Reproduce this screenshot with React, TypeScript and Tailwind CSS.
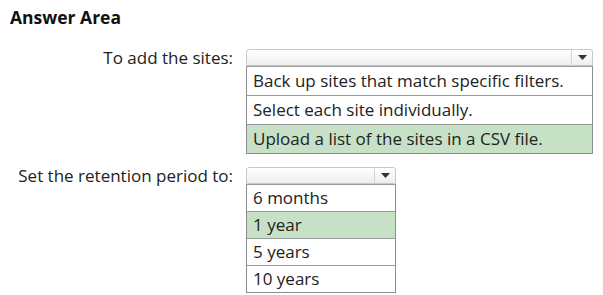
const font = { fontFamily: '"Open Sans", "Liberation Sans", sans-serif' };

function Select({ width }: { width: string }) {
  return (
    <div className={`${width} h-[17px] flex rounded-t-[3px] border border-[#c8c8c8] bg-gradient-to-b from-white to-[#eeeeee]`}>
      <div className="flex-1" />
      <div className="w-[21px] border-l border-[#d4d4d4] flex items-center justify-center">
        <svg width="9" height="5" viewBox="0 0 9 5">
          <path d="M0 0 L9 0 L4.5 5 Z" fill="#333" />
        </svg>
      </div>
    </div>
  );
}

function Options({
  width,
  items,
  selected,
  rowH,
}: {
  width: string;
  items: string[];
  selected: number;
  rowH: string;
}) {
  return (
    <div className={`${width} border border-[#8c8c8c] border-t-0`}>
      {items.map((item, i) => (
        <div
          key={item}
          className={`${rowH} flex items-center pl-[6px] pb-[2px] text-[17px] leading-none border-t border-[#9a9a9a] ${
            i === selected ? "bg-[#c6e1c6]" : "bg-white"
          }`}
        >
          {item}
        </div>
      ))}
    </div>
  );
}

export default function App() {
  return (
    <div className="w-[603px] h-[295px] bg-white text-[#222] overflow-hidden" style={font}>
      <h1 className="pl-[10px] pt-[7px] text-[17.5px] font-bold leading-[20px] text-[#111]">Answer Area</h1>

      <div className="flex mt-[22px]">
        <div className="w-[246px] pr-[13px] text-right text-[17px] leading-[17px]">To add the sites:</div>
        <div>
          <Select width="w-[347px]" />
          <Options
            width="w-[347px]"
            rowH="h-[29px]"
            selected={2}
            items={[
              "Back up sites that match specific filters.",
              "Select each site individually.",
              "Upload a list of the sites in a CSV file.",
            ]}
          />
        </div>
      </div>

      <div className="flex mt-[13px]">
        <div className="w-[246px] pr-[13px] text-right text-[17px] leading-[17px]">Set the retention period to:</div>
        <div>
          <Select width="w-[150px]" />
          <Options
            width="w-[150px]"
            rowH="h-[27px]"
            selected={1}
            items={["6 months", "1 year", "5 years", "10 years"]}
          />
        </div>
      </div>
    </div>
  );
}
